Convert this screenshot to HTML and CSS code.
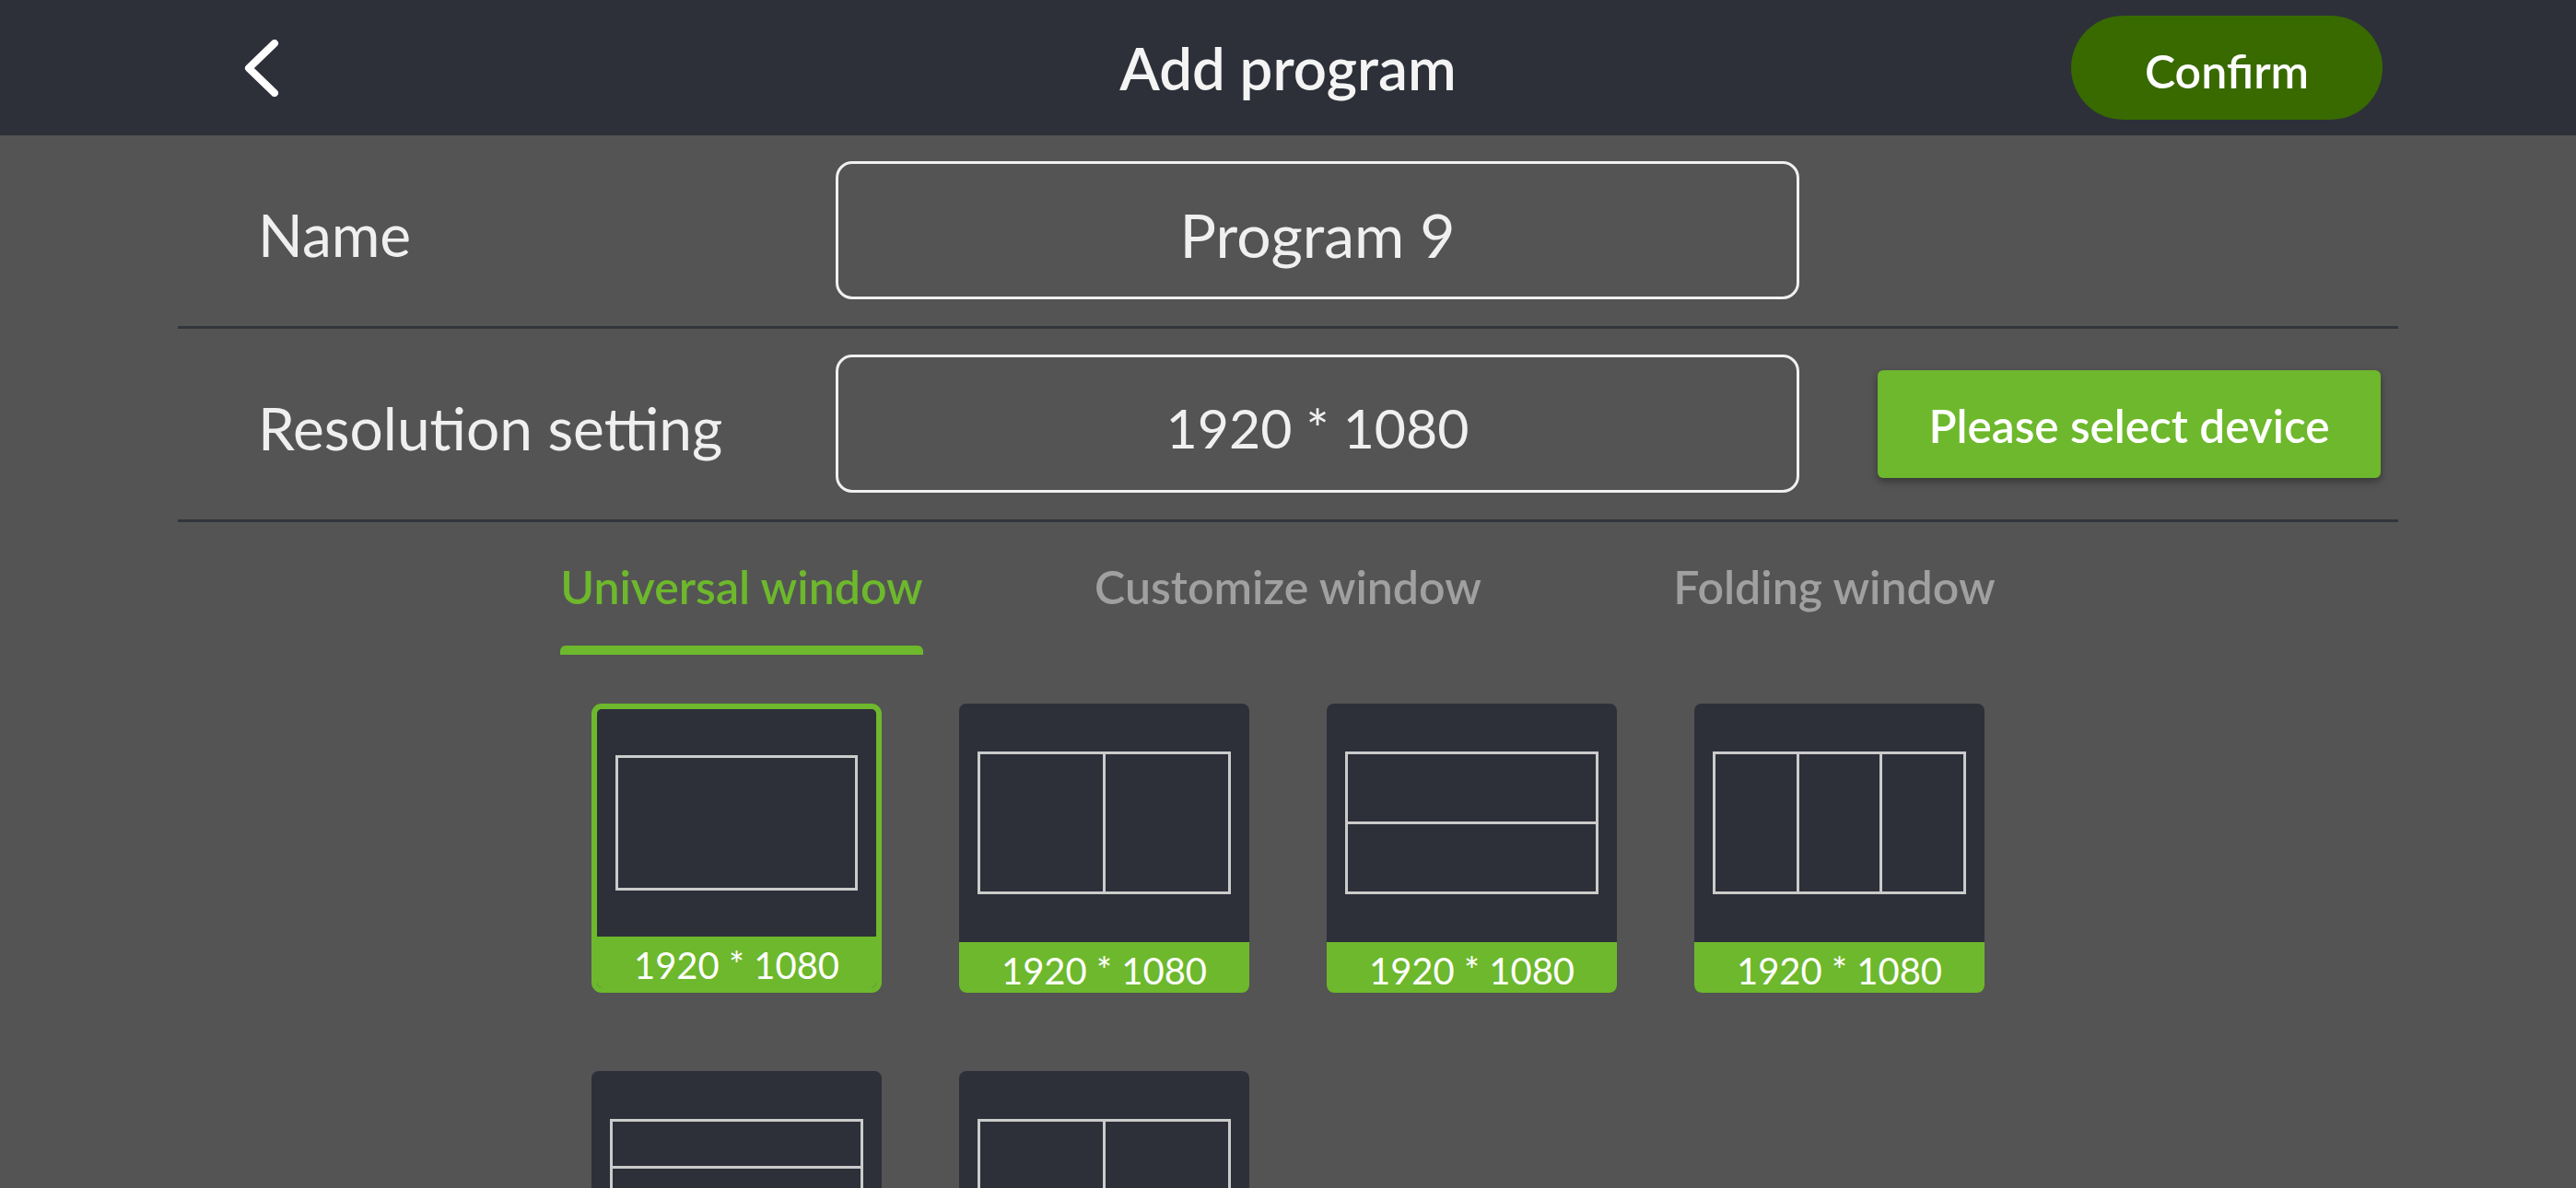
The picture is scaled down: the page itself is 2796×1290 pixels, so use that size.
FILE: index.html
```html
<!DOCTYPE html>
<html lang="en">
<head>
<meta charset="utf-8">
<title>Add program</title>
<link rel="stylesheet" href="styles.css">
</head>
<body>
<header class="topbar">
  <div class="topbar-left">
    <button class="back" aria-label="Back">
      <svg class="back-icon" viewBox="0 0 40 62" width="40" height="62"><path d="M34 4 L6 31 L34 58" fill="none" stroke="#ffffff" stroke-width="8" stroke-linecap="round" stroke-linejoin="round"/></svg>
    </button>
  </div>
  <h1 class="title">Add program</h1>
  <div class="topbar-right">
    <button class="confirm">Confirm</button>
  </div>
</header>

<main class="content">
  <section class="form">
    <div class="form-row">
      <div class="form-label"><span class="txt">Name</span></div>
      <div class="field"><span class="txt">Program 9</span></div>
    </div>
    <div class="form-row">
      <div class="form-label"><span class="txt">Resolution setting</span></div>
      <div class="field field-res"><span class="txt">1920 * 1080</span></div>
      <button class="select-device"><span class="txt">Please select device</span></button>
    </div>
  </section>

  <nav class="tabs">
    <div class="tab"><span class="tab-text active">Universal window</span></div>
    <div class="tab"><span class="tab-text">Customize window</span></div>
    <div class="tab"><span class="tab-text">Folding window</span></div>
  </nav>

  <section class="layouts">
    <div class="card selected">
      <div class="preview"><div class="frame g1"><i></i></div></div>
      <div class="card-label"><span class="txt">1920 * 1080</span></div>
    </div>
    <div class="card">
      <div class="preview"><div class="frame g2v"><i></i><i></i></div></div>
      <div class="card-label"><span class="txt">1920 * 1080</span></div>
    </div>
    <div class="card">
      <div class="preview"><div class="frame g2h"><i></i><i></i></div></div>
      <div class="card-label"><span class="txt">1920 * 1080</span></div>
    </div>
    <div class="card">
      <div class="preview"><div class="frame g3v"><i></i><i></i><i></i></div></div>
      <div class="card-label"><span class="txt">1920 * 1080</span></div>
    </div>
    <div class="card">
      <div class="preview"><div class="frame g3h"><i></i><i></i><i></i></div></div>
      <div class="card-label"><span class="txt">1920 * 1080</span></div>
    </div>
    <div class="card">
      <div class="preview"><div class="frame g4"><i></i><i></i><i></i><i></i></div></div>
      <div class="card-label"><span class="txt">1920 * 1080</span></div>
    </div>
  </section>
</main>
</body>
</html>
```
FILE: styles.css
```css
html, body {
  margin: 0;
  padding: 0;
  height: 100%;
  overflow: hidden;
}
body {
  background: #545454;
  font-family: "Lato", "Noto Sans", sans-serif;
  color: #f0f0f0;
}
button {
  font-family: inherit;
  border: none;
  margin: 0;
  padding: 0;
  cursor: pointer;
}

/* ---------- top bar ---------- */
.topbar {
  height: 147px;
  background: #2d3039;
  display: grid;
  grid-template-columns: 1fr auto 1fr;
  align-items: center;
}
.topbar-left {
  padding-left: 264px;
  display: flex;
  align-items: center;
}
.back {
  background: transparent;
  display: flex;
  width: 40px;
  height: 62px;
}
.back-icon { display: block; }
.title {
  margin: 0;
  font-size: 63.5px;
  font-weight: 600;
  color: #f4f4f4;
  line-height: 1.2;
  padding-top: 2px;
}
.topbar-right {
  display: flex;
  justify-content: flex-end;
  padding-right: 210px;
}
.confirm {
  width: 338px;
  height: 113px;
  border-radius: 57px;
  background: #386a00;
  color: #ffffff;
  font-size: 50px;
  font-weight: 600;
  padding-top: 6px;
}

/* ---------- form ---------- */
.form {
  margin: 0 193px;
}
.form-row {
  display: flex;
  align-items: center;
  padding: 28px 0 29px;
  border-bottom: 3px solid #32353c;
}
.form-label {
  flex: 0 0 714px;
  box-sizing: border-box;
  padding-left: 87px;
  font-size: 64px;
  color: #efefef;
}
.txt {
  display: inline-block;
  padding-top: 8px;
}
.field {
  box-sizing: border-box;
  width: 1046px;
  height: 150px;
  border: 3px solid #f0f0f0;
  border-radius: 18px;
  display: flex;
  align-items: center;
  justify-content: center;
  font-size: 66px;
  color: #f0f0f0;
}
.field-res { font-size: 59px; }
.select-device {
  margin-left: 85px;
  width: 546px;
  height: 117px;
  border-radius: 6px;
  background: #6db82c;
  color: #ffffff;
  font-size: 49.5px;
  font-weight: 600;
  box-shadow: 0 4px 8px rgba(0, 0, 0, 0.35);
}
.select-device .txt { padding-top: 4px; }

/* ---------- tabs ---------- */
.tabs {
  width: 1779px;
  margin: 0 auto;
  display: flex;
  padding-top: 46px;
}
.tab {
  flex: 1;
  text-align: center;
}
.tab-text {
  display: inline-block;
  font-size: 50px;
  font-weight: 600;
  line-height: 49px;
  color: #a0a0a0;
}
.tab-text::after {
  content: "";
  display: block;
  height: 10px;
  margin-top: 39px;
  border-radius: 6px 6px 0 0;
  background: transparent;
}
.tab-text.active { color: #6db82c; }
.tab-text.active::after { background: #6db82c; }

/* ---------- layout cards ---------- */
.layouts {
  margin-top: 53px;
  display: grid;
  grid-template-columns: repeat(4, 315px);
  grid-auto-rows: 314px;
  column-gap: 84px;
  row-gap: 85px;
  justify-content: center;
}
.card {
  box-sizing: border-box;
  background: #2d3039;
  border-radius: 8px;
  overflow: hidden;
  display: flex;
  flex-direction: column;
}
.card.selected {
  border: 6px solid #6db82c;
  border-radius: 11px;
}
.preview {
  flex: 1;
  display: flex;
  align-items: center;
  padding: 0 20px;
}
.frame {
  box-sizing: border-box;
  width: 100%;
  aspect-ratio: 16 / 9;
  padding: 3px;
  gap: 3px;
  background: #cbcbcb;
  display: grid;
}
.frame i { background: #2d3039; }
.g1 { grid-template-columns: 1fr; }
.g2v { grid-template-columns: 1fr 1fr; }
.g2h { grid-template-rows: 1fr 1fr; }
.g3v { grid-template-columns: 1fr 1fr 1fr; }
.g3h { grid-template-rows: 1fr 1fr 1fr; }
.g4 { grid-template-columns: 1fr 1fr; grid-template-rows: 1fr 1fr; }
.card-label {
  height: 55px;
  flex: 0 0 55px;
  background: #6db82c;
  color: #ffffff;
  font-size: 40px;
  display: flex;
  align-items: center;
  justify-content: center;
}
.card-label .txt { padding-top: 6px; }
```
